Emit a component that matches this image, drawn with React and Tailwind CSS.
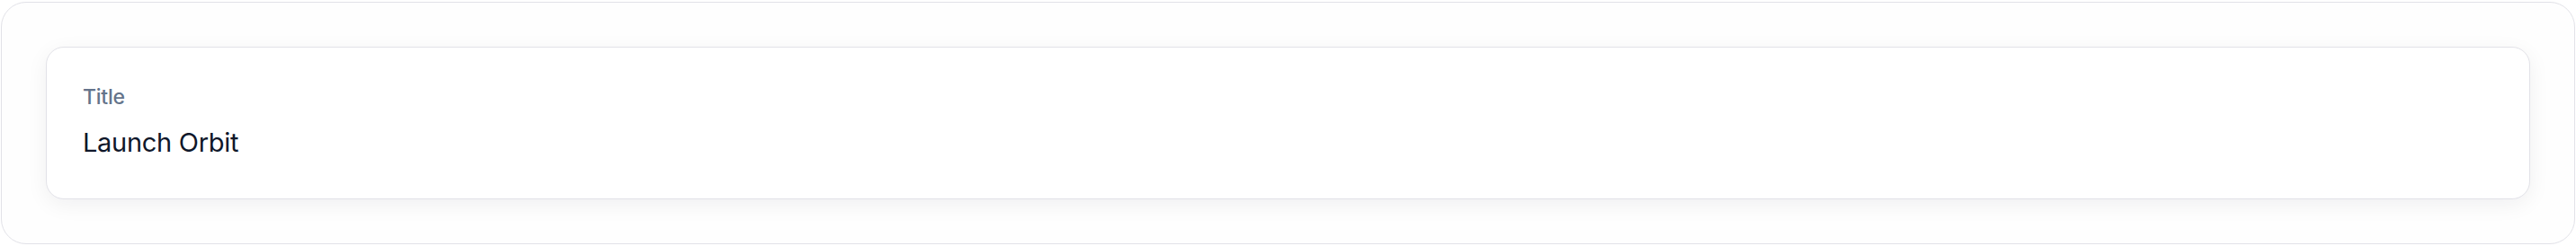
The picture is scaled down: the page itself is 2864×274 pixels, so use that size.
import React from 'react';

const fields = [{ label: 'Title', value: 'Launch Orbit' }];

const App = () => {
    return (
        <div className="w-[2864px] h-[274px] bg-white px-px pt-[2px] font-['Inter',sans-serif]">
            {/* outer frame */}
            <div className="h-[270px] rounded-[28px] border border-[#e2e2e8] bg-[#fefefe] p-[49px]">
                {fields.map((f) => (
                    <div
                        key={f.label}
                        className="h-[170px] rounded-[20px] border border-[#e2e2e8] bg-white px-10 pt-[41px] shadow-[0_6px_24px_rgba(15,23,42,0.06)]"
                    >
                        <p className="text-[23px] leading-7 font-medium tracking-[-0.01em] text-[#64748b]">{f.label}</p>
                        <p className="mt-[19px] text-[29px] leading-9 tracking-[-0.01em] text-[#0f172a]">{f.value}</p>
                    </div>
                ))}
            </div>
        </div>
    );
};

export default App;
